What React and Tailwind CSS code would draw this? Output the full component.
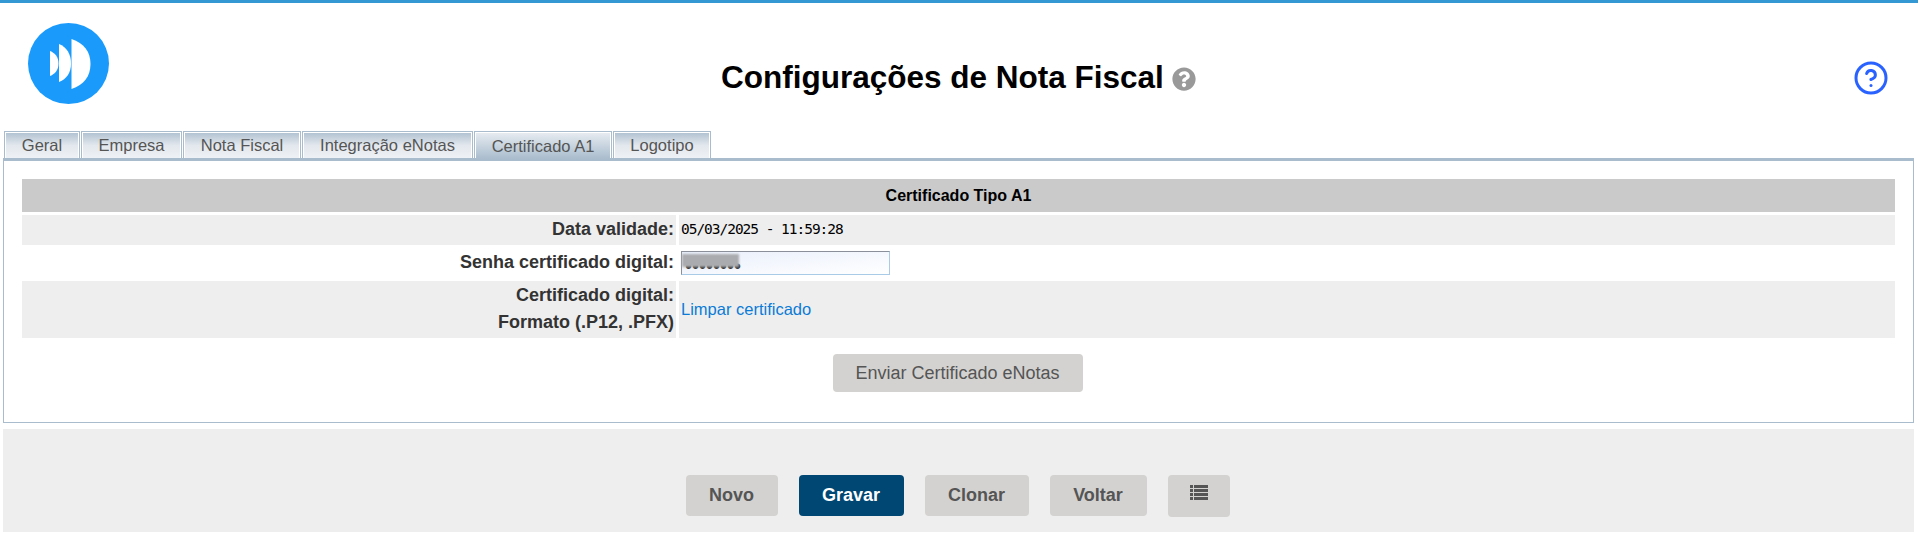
import React from "react";
import { CircleHelp } from "lucide-react";
import { FaQuestionCircle } from "react-icons/fa";

const tabs = [
  { label: "Geral", w: "w-[76px]" },
  { label: "Empresa", w: "w-[101px]" },
  { label: "Nota Fiscal", w: "w-[118px]" },
  { label: "Integração eNotas", w: "w-[171px]" },
  { label: "Certificado A1", w: "w-[138px]", active: true },
  { label: "Logotipo", w: "w-[98px]" },
];

const Logo = () => (
  <svg width="81" height="81" viewBox="0 0 81 81" className="shrink-0">
    <circle cx="40.5" cy="40.5" r="40.5" fill="#1a9bfc" />
    <path d="M43.5 16 C56 20 62.5 29 62.5 41 C62.5 53 56 62 43.5 66 Z" fill="#fff" />
    <path d="M31 21 C38.500 24 43 31 43 40.500 C43 50 38.500 56 31 59 Z" fill="#fff" />
    <path d="M22 28 C27 30 30.500 34 30.500 40.500 C30.500 47 27 51 22 53 Z" fill="#fff" />
  </svg>
);

const ListIcon = () => (
  <svg width="18" height="15" viewBox="0 0 18 15" fill="#555">
    <rect x="0" y="0" width="3" height="3" />
    <rect x="4" y="0" width="14" height="3" />
    <rect x="0" y="4" width="3" height="3" />
    <rect x="4" y="4" width="14" height="3" />
    <rect x="0" y="8" width="3" height="3" />
    <rect x="4" y="8" width="14" height="3" />
    <rect x="0" y="12" width="3" height="3" />
    <rect x="4" y="12" width="14" height="3" />
  </svg>
);

const Tabs = () => (
  <div className="flex h-[27px] pl-1 gap-px items-end">
    {tabs.map((t) => (
      <div
        key={t.label}
        className={`${t.w} h-[27px] border border-b-0 border-[#a9bccd] p-px pb-0 ${t.active ? "h-[28px] translate-y-px" : ""}`}
      >
        <div
          className={`h-full flex items-center justify-center text-[16.5px] text-[#555] ${
            t.active
              ? "bg-gradient-to-b from-[#e6ebf0] to-[#a9bccd]"
              : "bg-gradient-to-b from-[#b3c3d2] via-[#e3e8ee] to-[#eef1f5]"
          }`}
        >
          {t.label}
        </div>
      </div>
    ))}
  </div>
);

const Label = ({ children, className = "" }) => (
  <div className={`flex items-center justify-end pr-[2px] pb-[2px] font-bold text-[18px] text-[#333] text-right ${className}`}>
    {children}
  </div>
);

const App = () => {
  return (
    <div className="w-[1918px] h-[535px] bg-white font-['Liberation_Sans',Arial,sans-serif] overflow-hidden">
      <div className="h-[3px] bg-[#3498d3]" />

      <div className="relative h-[128px] flex justify-between pl-[28px] pr-[29px]">
        <div className="pt-[20px]">
          <Logo />
        </div>
        <div className="pt-[57px]">
          <CircleHelp size={36} color="#2962ff" strokeWidth={2} />
        </div>
        <h1 className="absolute left-[721px] top-[52px] flex items-center text-[31.5px] leading-[44px] font-bold text-black">
          Configurações de Nota Fiscal
          <FaQuestionCircle className="ml-[8px] mt-[3px] text-[#999]" size={24} />
        </h1>
      </div>

      <Tabs />

      <div className="mx-[3px] w-[1911px] h-[265px] border border-t-[3px] border-[#a9bccd] pt-[18px] pl-[18px]">
        <div className="w-[1873px] h-[33px] bg-[#cacaca] flex items-center justify-center font-bold text-[16px] text-black">
          Certificado Tipo A1
        </div>
        <div className="mt-[3px] grid grid-cols-[654px_1216px] gap-x-[3px]">
          <Label className="h-[30px] bg-[#eeeeee]">Data validade:</Label>
          <div className="h-[30px] bg-[#eeeeee] flex items-center pl-[2px] text-[14.5px] tracking-[-1.03px] text-black font-['DejaVu_Sans_Mono',monospace]">
            05/03/2025 - 11:59:28
          </div>
          <Label className="h-[36px]">Senha certificado digital:</Label>
          <div className="h-[36px] flex items-center pl-[2px]">
            <div className="relative w-[209px] h-[24px] border border-[#a9cbe8] border-l-[#8a8f99] border-t-[#8a8f99] bg-gradient-to-br from-[#e9effb] to-white flex items-center">
              <span className="pl-[3px] pt-[6px] text-[20px] leading-[16px] text-[#333]">••••••••</span>
              <span className="absolute left-0 top-[2px] w-[57px] h-[13px] bg-[#aaabae] blur-[1px]" />
            </div>
          </div>
          <Label className="h-[57px] bg-[#eeeeee] leading-[27px]">
            <span>
              Certificado digital:
              <br />
              Formato (.P12, .PFX)
            </span>
          </Label>
          <div className="h-[57px] bg-[#eeeeee] flex items-center pl-[2px] text-[16.5px] text-[#0a7bd6]">
            Limpar certificado
          </div>
        </div>
        <div className="mt-[16px] w-[1873px] flex justify-center pr-[2px]">
          <button className="w-[250px] h-[38px] bg-[#d3d2d0] rounded-[4px] text-[18px] text-[#555]">
            Enviar Certificado eNotas
          </button>
        </div>
      </div>

      <div className="mx-[3px] mt-[6px] w-[1911px] h-[103px] bg-[#eeeeee] pt-[46px] flex justify-center gap-[21px] pr-[2px]">
        <button className="w-[92px] h-[41px] bg-[#d3d2d0] rounded-[4px] font-bold text-[18px] text-[#555]">Novo</button>
        <button className="w-[105px] h-[41px] bg-[#004873] rounded-[4px] font-bold text-[18px] text-white">Gravar</button>
        <button className="w-[104px] h-[41px] bg-[#d3d2d0] rounded-[4px] font-bold text-[18px] text-[#555]">Clonar</button>
        <button className="w-[97px] h-[41px] bg-[#d3d2d0] rounded-[4px] font-bold text-[18px] text-[#555]">Voltar</button>
        <button className="w-[62px] h-[42px] bg-[#d3d2d0] rounded-[4px] flex justify-center pt-[10px]">
          <ListIcon />
        </button>
      </div>
    </div>
  );
};

export default App;
